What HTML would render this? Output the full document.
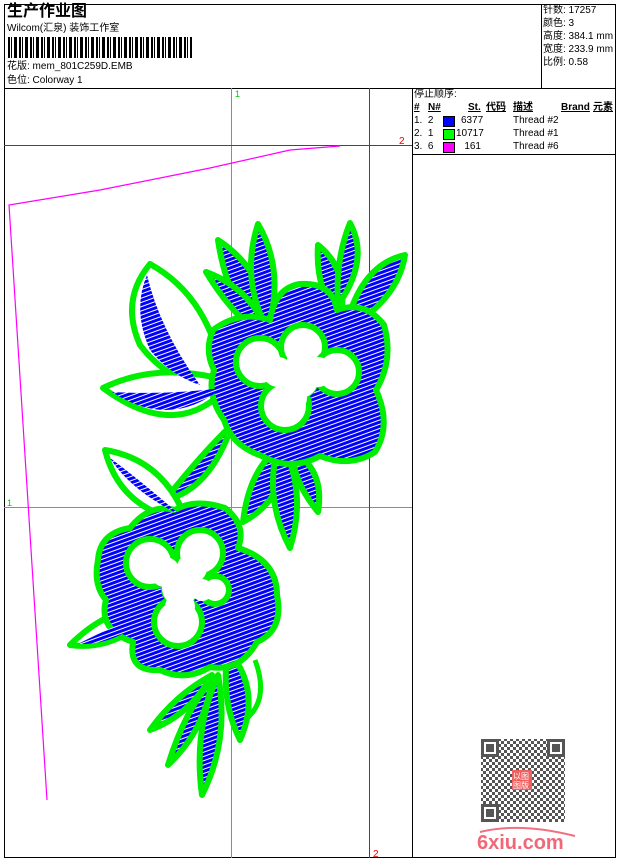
<!DOCTYPE html>
<html><head><meta charset="utf-8"><style>
html,body{margin:0;padding:0;background:#fff;}
body{width:620px;height:860px;position:relative;overflow:hidden;font-family:"Liberation Sans","Noto Sans CJK SC",sans-serif;color:#000;}
.t{position:absolute;font-size:10px;line-height:12px;white-space:nowrap;}
</style></head><body>
<svg width="620" height="860" style="position:absolute;left:0;top:0" xmlns="http://www.w3.org/2000/svg">
<defs>
<pattern id="h" width="4" height="4" patternUnits="userSpaceOnUse" patternTransform="rotate(70)"><rect width="4" height="4" fill="#0000ff"/><rect width="1" height="4" fill="#fff"/></pattern>
<pattern id="q" width="6" height="6" patternUnits="userSpaceOnUse"><rect width="6" height="6" fill="#fff"/><rect width="3" height="3" fill="#555"/><rect x="3" y="3" width="3" height="3" fill="#555"/></pattern>
</defs>
<g shape-rendering="crispEdges">
<rect x="4.5" y="4.5" width="611" height="853" fill="none" stroke="#000"/>
<line x1="4" y1="88.5" x2="616" y2="88.5" stroke="#000"/>
<line x1="541.5" y1="4" x2="541.5" y2="88" stroke="#000"/>
<line x1="412.5" y1="88" x2="412.5" y2="858" stroke="#000"/>
<line x1="412" y1="154.5" x2="616" y2="154.5" stroke="#000"/>
<line x1="231.5" y1="88" x2="231.5" y2="858" stroke="#00ee00"/>
<line x1="4" y1="507.5" x2="412" y2="507.5" stroke="#00ee00"/>
<line x1="369.5" y1="88" x2="369.5" y2="858" stroke="#ee0000"/>
<line x1="4" y1="145.5" x2="412" y2="145.5" stroke="#ee0000"/>
</g>
<text x="235" y="97" font-size="9" fill="#00cc00" font-family="Liberation Sans">1</text>
<text x="7" y="506" font-size="9" fill="#00cc00" font-family="Liberation Sans">1</text>
<text x="399" y="144" font-size="10" fill="#ee0000" font-family="Liberation Sans">2</text>
<text x="373" y="857" font-size="10" fill="#ee0000" font-family="Liberation Sans">2</text>
<polyline points="340,146 290,150 210,168 100,190 9,205 47,800" fill="none" stroke="#ff00ff" stroke-width="1.2"/>
<g stroke="#00ee00" stroke-width="6" stroke-linejoin="round" fill="url(#h)">
<path d="M150,264 Q120,300 140,345 Q170,385 225,392 Q215,300 150,264Z" fill="#fff"/>
<path d="M103,388 Q160,360 232,382 Q180,445 103,388Z" fill="#fff"/>
<path d="M218,240 Q265,270 280,345 Q230,320 218,240Z"/>
<path d="M206,272 Q255,290 270,340 Q235,320 206,272Z"/>
<path d="M258,224 Q285,270 268,330 Q240,280 258,224Z"/>
<path d="M318,245 Q350,270 340,320 Q315,290 318,245Z"/>
<path d="M350,223 Q370,260 338,305 Q335,260 350,223Z"/>
<path d="M405,255 Q360,265 345,330 Q398,300 405,255Z"/>
<path d="M165,500 Q205,450 232,425 Q210,490 165,500Z"/>
<path d="M243,522 Q250,460 292,440 Q285,500 243,522Z"/>
<path d="M290,548 Q262,495 280,440 Q308,490 290,548Z"/>
<path d="M318,512 Q292,480 292,450 Q325,470 318,512Z"/>
<path d="M105,450 Q165,460 187,522 Q120,510 105,450Z" fill="#fff"/>
<path d="M213,330 Q240,310 270,320 Q275,288 300,284 Q332,282 337,310 Q365,300 384,325 Q394,360 376,390 Q392,425 375,452 Q350,468 320,456 Q290,472 262,456 Q232,446 224,420 Q206,395 214,370 Q204,350 213,330Z"/>
<path d="M70,645 Q110,605 160,605 Q120,652 70,645Z" fill="#fff"/>
<path d="M150,730 Q175,695 212,675 Q190,715 150,730Z"/>
<path d="M168,765 Q185,710 212,680 Q205,730 168,765Z"/>
<path d="M202,795 Q193,730 218,675 Q230,740 202,795Z"/>
<path d="M228,650 Q262,690 240,740 Q220,700 228,650Z"/>
<path d="M98,560 Q100,533 130,528 Q150,503 175,510 Q195,498 225,508 Q247,525 238,548 Q277,560 277,595 Q284,630 257,642 Q240,672 210,667 Q185,682 160,670 Q128,672 133,642 Q98,630 106,600 Q93,585 98,560Z"/>
</g>
<g fill="url(#h)">
<path d="M147,275 Q132,310 150,350 Q170,375 200,385 Q160,330 147,275Z"/>
<path d="M112,392 Q170,395 222,388 Q170,430 112,392Z"/>
<path d="M110,458 Q130,490 180,515 Q140,480 110,458Z"/>
<path d="M78,644 Q115,625 150,612 Q120,645 78,644Z"/>
</g>
<path d="M245,720 Q270,700 255,660" fill="none" stroke="#00ee00" stroke-width="5"/>
<g fill="#fff" stroke="#00ee00" stroke-width="6">
<circle cx="260" cy="362" r="24"/>
<circle cx="303" cy="347" r="22"/>
<circle cx="337" cy="372" r="22"/>
<circle cx="285" cy="406" r="24"/>
<circle cx="300" cy="380" r="16"/>
<circle cx="150" cy="563" r="24"/>
<circle cx="200" cy="553" r="23"/>
<circle cx="178" cy="622" r="24"/>
<circle cx="215" cy="590" r="14"/>
<circle cx="180" cy="588" r="16"/>
</g>
<g fill="#fff">
<circle cx="300" cy="380" r="18"/><circle cx="278" cy="372" r="15"/><circle cx="318" cy="372" r="15"/><circle cx="292" cy="398" r="15"/><circle cx="300" cy="360" r="13"/>
<circle cx="180" cy="588" r="18"/><circle cx="165" cy="572" r="15"/><circle cx="192" cy="568" r="15"/><circle cx="180" cy="607" r="15"/><circle cx="202" cy="590" r="11"/>
</g>
<rect x="481" y="739" width="84" height="83" fill="url(#q)"/>
<rect x="481" y="739" width="18" height="18" fill="#fff"/><rect x="482.5" y="740.5" width="15" height="15" fill="none" stroke="#555" stroke-width="3"/><rect x="486" y="744" width="8" height="8" fill="#555"/>
<rect x="547" y="739" width="18" height="18" fill="#fff"/><rect x="548.5" y="740.5" width="15" height="15" fill="none" stroke="#555" stroke-width="3"/><rect x="552" y="744" width="8" height="8" fill="#555"/>
<rect x="481" y="804" width="18" height="18" fill="#fff"/><rect x="482.5" y="805.5" width="15" height="15" fill="none" stroke="#555" stroke-width="3"/><rect x="486" y="809" width="8" height="8" fill="#555"/>
<rect x="512" y="770" width="20" height="20" fill="#f06060"/>
<text x="513" y="779" font-size="8" fill="#fff" font-family="Noto Sans CJK SC">以图</text>
<text x="513" y="788" font-size="8" fill="#fff" font-family="Noto Sans CJK SC">图版</text>
<path d="M480,832 Q520,822 575,836" fill="none" stroke="#f07080" stroke-width="2"/>
<text x="477" y="849" font-size="20" font-weight="bold" fill="#f06878" font-family="Liberation Sans">6xiu.com</text>
</svg>
<div class="t" style="left:7px;top:3px;font-size:16px;line-height:18px;font-weight:bold;">生产作业图</div>
<div class="t" style="left:7px;top:23px;">Wilcom(汇泉) 装饰工作室</div>
<div style="position:absolute;left:8px;top:37px;width:184px;height:21px;background:repeating-linear-gradient(90deg,#000 0 2px,#fff 2px 3px,#000 3px 4px,#fff 4px 6px,#000 6px 9px,#fff 9px 11px);"></div>
<div class="t" style="left:7px;top:61px;">花版: mem_801C259D.EMB</div>
<div class="t" style="left:7px;top:75px;">色位: Colorway 1</div>
<div class="t" style="left:543px;top:5px;">针数: 17257</div>
<div class="t" style="left:543px;top:18px;">颜色: 3</div>
<div class="t" style="left:543px;top:31px;">高度: 384.1 mm</div>
<div class="t" style="left:543px;top:44px;">宽度: 233.9 mm</div>
<div class="t" style="left:543px;top:57px;">比例: 0.58</div>
<div class="t" style="left:414px;top:89px;">停止顺序:</div>
<div class="t" style="left:414px;top:102px;font-weight:bold;text-decoration:underline;">#</div>
<div class="t" style="left:428px;top:102px;font-weight:bold;text-decoration:underline;">N#</div>
<div class="t" style="left:468px;top:102px;font-weight:bold;text-decoration:underline;">St.</div>
<div class="t" style="left:486px;top:102px;font-weight:bold;text-decoration:underline;">代码</div>
<div class="t" style="left:513px;top:102px;font-weight:bold;text-decoration:underline;">描述</div>
<div class="t" style="left:561px;top:102px;font-weight:bold;text-decoration:underline;">Brand</div>
<div class="t" style="left:593px;top:102px;font-weight:bold;text-decoration:underline;">元素</div>
<div class="t" style="left:414px;top:115px;">1.&nbsp; 2</div><div style="position:absolute;left:443px;top:116px;width:10px;height:9px;background:#0000ff;border:1px solid #000"></div><div class="t" style="left:461px;top:115px;width:20px;text-align:right;">6377</div><div class="t" style="left:513px;top:115px;">Thread #2</div>
<div class="t" style="left:414px;top:128px;">2.&nbsp; 1</div><div style="position:absolute;left:443px;top:129px;width:10px;height:9px;background:#00ff00;border:1px solid #000"></div><div class="t" style="left:456px;top:128px;width:25px;text-align:right;">10717</div><div class="t" style="left:513px;top:128px;">Thread #1</div>
<div class="t" style="left:414px;top:141px;">3.&nbsp; 6</div><div style="position:absolute;left:443px;top:142px;width:10px;height:9px;background:#ff00ff;border:1px solid #000"></div><div class="t" style="left:461px;top:141px;width:20px;text-align:right;">161</div><div class="t" style="left:513px;top:141px;">Thread #6</div>
</body></html>
